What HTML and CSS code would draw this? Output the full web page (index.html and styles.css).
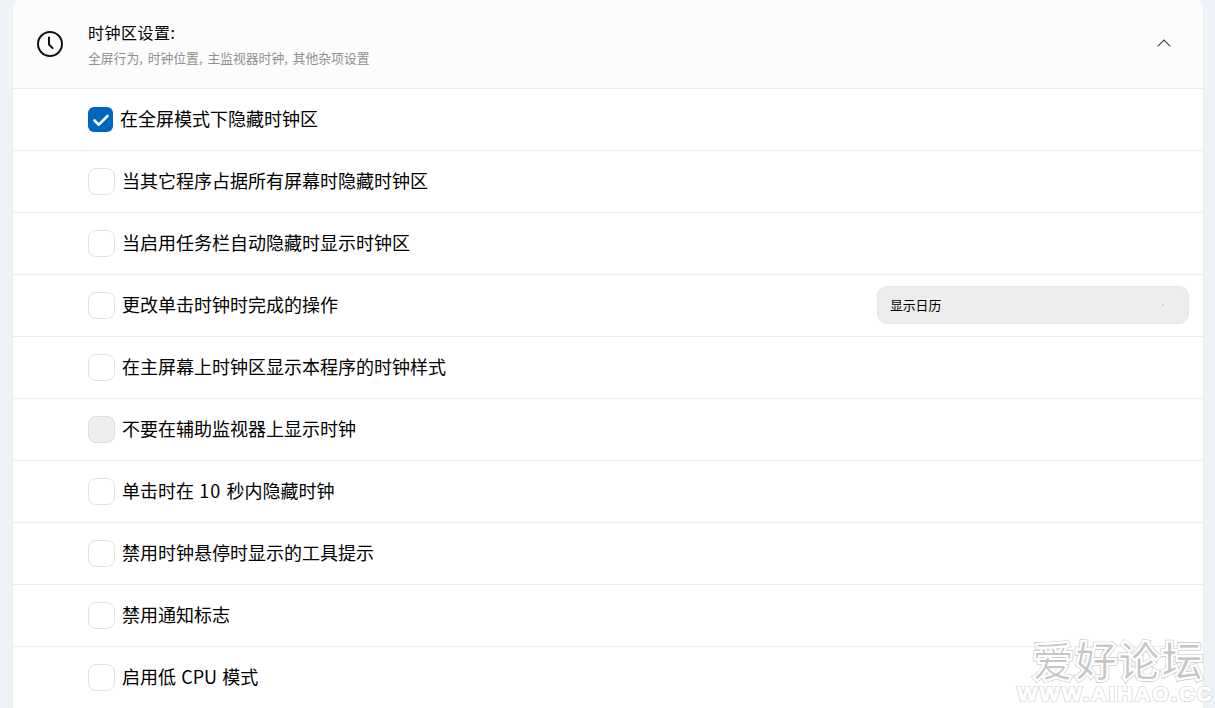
FILE: index.html
```html
<!DOCTYPE html>
<html lang="zh-CN">
<head>
<meta charset="utf-8">
<title>时钟区设置</title>
<link rel="stylesheet" href="styles.css">
</head>
<body>
<main class="card">
  <header class="head">
    <svg class="clock" width="28" height="28" viewBox="0 0 28 28" fill="none" stroke="#111" stroke-width="2" stroke-linecap="round" stroke-linejoin="round"><circle cx="14" cy="14" r="12"/><path d="M13 7.5v7l3.6 3.6"/></svg>
    <div class="head-text">
      <div class="title">时钟区设置:</div>
      <div class="sub">全屏行为, 时钟位置, 主监视器时钟, 其他杂项设置</div>
    </div>
    <svg class="chev" width="14" height="8" viewBox="0 0 14 8" fill="none" stroke="#444" stroke-width="1.2"><path d="M.7 7.3 7 1l6.3 6.3"/></svg>
  </header>
  <div class="row"><span class="box checked"><svg width="25" height="25" viewBox="0 0 25 25" fill="none" stroke="#fff" stroke-width="2.6" stroke-linecap="round" stroke-linejoin="round"><path d="M6.5 13.5l4.3 4.2L19.5 9"/></svg></span><span class="label">在全屏模式下隐藏时钟区</span></div>
  <div class="row"><span class="box"></span><span class="label">当其它程序占据所有屏幕时隐藏时钟区</span></div>
  <div class="row"><span class="box"></span><span class="label">当启用任务栏自动隐藏时显示时钟区</span></div>
  <div class="row"><span class="box"></span><span class="label">更改单击时钟时完成的操作</span>
    <div class="select"><span>显示日历</span><i class="dot"></i></div>
  </div>
  <div class="row"><span class="box"></span><span class="label">在主屏幕上时钟区显示本程序的时钟样式</span></div>
  <div class="row"><span class="box off"></span><span class="label">不要在辅助监视器上显示时钟</span></div>
  <div class="row"><span class="box"></span><span class="label">单击时在 <span class="num">10</span> 秒内隐藏时钟</span></div>
  <div class="row"><span class="box"></span><span class="label">禁用时钟悬停时显示的工具提示</span></div>
  <div class="row"><span class="box"></span><span class="label">禁用通知标志</span></div>
  <div class="row"><span class="box"></span><span class="label">启用低 CPU 模式</span></div>
</main>
<div class="mark">
  <div class="mark-cn" data-text="爱好论坛">爱好论坛</div>
  <div class="mark-en" data-text="WWW.AIHAO.CC">WWW.AIHAO.CC</div>
</div>
</body>
</html>
```
FILE: styles.css
```css
html, body { margin: 0; padding: 0; height: 708px; overflow: hidden; }
body {
  background: #eef3fa;
  font-family: "Noto Sans CJK SC", "Noto Sans", sans-serif;
  color: #000;
  padding: 0 11px 0 12px;
  box-sizing: border-box;
  position: relative;
}
.card {
  background: #fff;
  border-left: 1px solid #ececec;
  border-right: 1px solid #ececec;
  border-radius: 8px 8px 0 0;
  height: 708px;
  overflow: hidden;
}
.head {
  height: 86px;
  background: #fcfcfc;
  border-bottom: 1px solid #eaeaea;
  display: flex;
  align-items: center;
  padding: 0 30px 2px 23px;
}
.clock { flex: none; margin-right: 24px; margin-top: 2px; }
.head-text { flex: 1; display: flex; flex-direction: column; gap: 5px; }
.title { font-size: 16px; line-height: 24px; letter-spacing: .5px; }
.sub { font-size: 12.8px; line-height: 18px; color: #8f8f8f; word-spacing: 2.1px; }
.chev { flex: none; margin-right: 2px; }
.row {
  height: 61px;
  border-bottom: 1px solid #ececec;
  display: flex;
  align-items: center;
  padding-left: 75px;
  padding-right: 14px;
}
.box {
  flex: none;
  width: 27px;
  height: 27px;
  box-sizing: border-box;
  border: 1px solid #e2e2e2;
  border-radius: 8px;
  background: #fff;
  margin-right: 7px;
}
.box.checked {
  width: 25px;
  height: 25px;
  border: 0;
  border-radius: 6px;
  background: #0067c0;
}
.box.checked svg { display: block; }
.box.off { background: #eeeeee; border-color: #dedede; }
.label {
  font-size: 18px;
  line-height: 26px;
  flex: 1;
  white-space: nowrap;
  margin-bottom: 4px;
  word-spacing: 1.2px;
}
.num { letter-spacing: 1px; }
.select {
  flex: none;
  width: 312px;
  height: 38px;
  box-sizing: border-box;
  background: #ededed;
  border: 1px solid #e6e6e6;
  border-radius: 10px;
  display: flex;
  align-items: center;
  justify-content: space-between;
  padding: 0 24px 0 12px;
  margin-bottom: 2px;
  font-size: 12.8px;
}
.dot { width: 2px; height: 2px; background: #d4d4d4; }
.mark {
  position: absolute;
  right: 0;
  bottom: 0;
  width: 200px;
  height: 72px;
  text-align: center;
  font-family: "Liberation Sans", "Noto Sans CJK SC", sans-serif;
  font-weight: 700;
  pointer-events: none;
}
.mark-cn, .mark-en { position: relative; white-space: nowrap; }
.mark-cn {
  font-family: "Noto Sans CJK SC", sans-serif;
  font-size: 42px;
  line-height: 46px;
  letter-spacing: 1px;
  margin-left: 6px;
  color: #c6c6c6;
  -webkit-text-stroke: 3.4px #c6c6c6;
}
.mark-cn::after, .mark-en::after {
  content: attr(data-text);
  position: absolute;
  left: 0;
  right: 0;
  top: 0;
}
.mark-cn::after { -webkit-text-stroke: 2.2px #fff; }
.mark-en {
  font-size: 21px;
  line-height: 20px;
  letter-spacing: 2.4px;
  color: #fff;
  margin: 2px 0 0 2px;
  -webkit-text-stroke: 2.2px #cdcdcd;
}
.mark-en::after { -webkit-text-stroke: 1px #fff; }
```
